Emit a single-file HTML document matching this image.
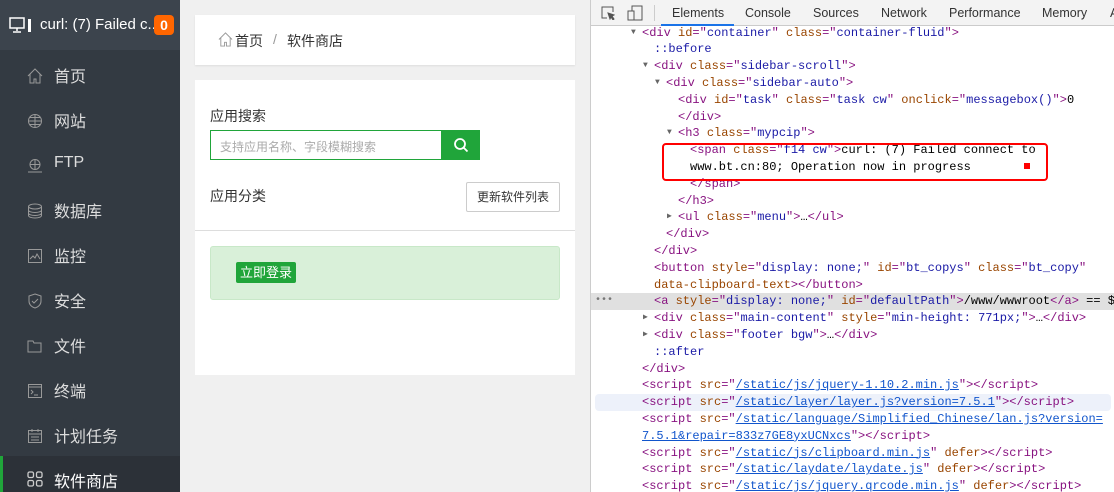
<!DOCTYPE html>
<html><head><meta charset="utf-8">
<style>
*{margin:0;padding:0;box-sizing:border-box}
body{width:1114px;height:492px;overflow:hidden;position:relative;background:#f0f0f0;font-family:"Liberation Sans","Noto Sans CJK SC",sans-serif}
#side{position:absolute;left:0;top:0;width:180px;height:492px;background:#333a42}
#side .hd{height:50px;background:#3c444d;position:relative;color:#fff}
#side .hd .t{position:absolute;left:40px;top:16px;font-size:15px;white-space:nowrap}
#side .hd .b{position:absolute;left:154px;top:15px;width:20px;height:20px;background:#f60;border-radius:4px;color:#fff;font-weight:bold;font-size:14px;text-align:center;line-height:20px}
.it{position:absolute;left:0;width:180px;height:45px;color:#ddd;font-size:16px}
.it span{position:absolute;left:54px;top:12px}
.it svg{position:absolute;left:27px;top:17px}
.act{background:#2c3138;border-left:3px solid #20a53a}
#main{position:absolute;left:180px;top:0;width:410px;height:492px;background:#f0f0f0}
.card{position:absolute;background:#fff;left:15px;width:380px}
#dev{position:absolute;left:590px;top:0;width:524px;height:492px;background:#fff;border-left:1px solid #ccc;overflow:hidden}
#tabs{height:26px;background:#f3f3f3;border-bottom:1px solid #cbcbcb;position:relative;font-size:12.5px;color:#333;z-index:2}
#tabs span{position:absolute;top:6px}
#code{position:absolute;top:24.6px;left:0;width:524px;font-family:"Liberation Mono",monospace;font-size:12px}
#code div{height:16.8px;line-height:16.8px;position:relative;white-space:pre}
.g{color:#881280}.a{color:#994500}.v{color:#1a1aa6}.p{color:#1a1aa6}.l{color:#1155cc;text-decoration:underline}
.tr{position:absolute;font-size:8px;color:#666;font-style:normal}
</style></head><body>
<div id="side">
 <div class="hd">
  <svg style="position:absolute;left:9px;top:17px" width="24" height="16" viewBox="0 0 24 16" fill="none" stroke="#fff" stroke-width="1.5"><rect x="1" y="1" width="14" height="10"/><path d="M8 11v3M4 15h8"/><rect x="19" y="2" width="3" height="13" fill="#fff" stroke="none"/></svg>
  <div class="t">curl: (7) Failed c...</div><div class="b">0</div>
 </div>
 <div class="it" style="top:51px"><svg width="16" height="16" viewBox="0 0 16 16" fill="none" stroke="#999"><path d="M1 8L8 1l7 7M3 6v9h4v-4h2v4h4V6"/></svg><span>首页</span></div>
 <div class="it" style="top:96px"><svg width="16" height="16" viewBox="0 0 16 16" fill="none" stroke="#999"><circle cx="8" cy="8" r="6.5"/><path d="M1.5 8h13M8 1.5v13M3 4.5h10M3 11.5h10"/></svg><span>网站</span></div>
 <div class="it" style="top:141px"><svg width="16" height="16" viewBox="0 0 16 16" fill="none" stroke="#999"><circle cx="8" cy="6.5" r="5"/><path d="M3 6.5h10M8 1.5v10M1 14h14"/></svg><span style="top:13px">FTP</span></div>
 <div class="it" style="top:186px"><svg width="16" height="16" viewBox="0 0 16 16" fill="none" stroke="#999"><ellipse cx="8" cy="3.5" rx="6.5" ry="2.5"/><path d="M1.5 3.5v9c0 1.5 3 2.5 6.5 2.5s6.5-1 6.5-2.5v-9M1.5 7c0 1.5 3 2.5 6.5 2.5s6.5-1 6.5-2.5M1.5 10c0 1.5 3 2.5 6.5 2.5s6.5-1 6.5-2.5"/></svg><span>数据库</span></div>
 <div class="it" style="top:231px"><svg width="16" height="16" viewBox="0 0 16 16" fill="none" stroke="#999"><rect x="1.5" y="1.5" width="13" height="13"/><path d="M3 11l3-3 2 2 2-4 3 5"/></svg><span>监控</span></div>
 <div class="it" style="top:276px"><svg width="16" height="16" viewBox="0 0 16 16" fill="none" stroke="#999"><path d="M8 1l6 2v5c0 4-3 6-6 7-3-1-6-3-6-7V3z M5 8l2 2 4-4"/></svg><span>安全</span></div>
 <div class="it" style="top:321px"><svg width="16" height="16" viewBox="0 0 16 16" fill="none" stroke="#999"><path d="M1 3h5l1 2h7v9H1z"/></svg><span>文件</span></div>
 <div class="it" style="top:366px"><svg width="16" height="16" viewBox="0 0 16 16" fill="none" stroke="#999"><rect x="1.5" y="1.5" width="13" height="13"/><path d="M1.5 4h13M4 7l2 2-2 2M7 12h4"/></svg><span>终端</span></div>
 <div class="it" style="top:411px"><svg width="16" height="16" viewBox="0 0 16 16" fill="none" stroke="#999"><rect x="1.5" y="2.5" width="13" height="12"/><path d="M1.5 6h13M5 1v3M11 1v3M4 9h8M4 12h8"/></svg><span>计划任务</span></div>
 <div class="it act" style="top:456px;height:36px"><svg style="left:24px;top:15px" width="16" height="16" viewBox="0 0 16 16" fill="none" stroke="#ccc" stroke-width="1.3"><rect x="1" y="1" width="5.5" height="5.5" rx="1.5"/><rect x="9.5" y="1" width="5.5" height="5.5" rx="1.5"/><rect x="1" y="9.5" width="5.5" height="5.5" rx="1.5"/><rect x="9.5" y="9.5" width="5.5" height="5.5" rx="1.5"/></svg><span style="left:51px;top:12px;color:#fff">软件商店</span></div>
</div>
<div id="main">
 <div class="card" style="top:15px;height:50px;box-shadow:0 1px 2px rgba(0,0,0,.08)">
  <svg style="position:absolute;left:23px;top:17px" width="15" height="15" viewBox="0 0 16 16" fill="none" stroke="#999"><path d="M1 8L8 1l7 7M3 6v9h4v-4h2v4h4V6"/></svg>
  <span style="position:absolute;left:40px;top:16px;font-size:14px;color:#333">首页</span>
  <span style="position:absolute;left:78px;top:16px;font-size:14px;color:#999">/</span>
  <span style="position:absolute;left:92px;top:16px;font-size:14px;color:#333">软件商店</span>
 </div>
 <div class="card" style="top:80px;height:295px">
  <div style="position:absolute;left:15px;top:26px;font-size:14px;color:#333">应用搜索</div>
  <div style="position:absolute;left:15px;top:50px;width:232px;height:30px;border:1px solid #20a53a;font-size:12px;color:#aaa;padding:7px 0 0 9px">支持应用名称、字段模糊搜索</div>
  <div style="position:absolute;left:246px;top:50px;width:39px;height:30px;background:#20a53a"><svg style="position:absolute;left:12px;top:7px" width="16" height="16" viewBox="0 0 16 16" fill="none" stroke="#fff" stroke-width="1.8"><circle cx="7" cy="7" r="5"/><path d="M10.5 10.5l4 4"/></svg></div>
  <div style="position:absolute;left:15px;top:106px;font-size:14px;color:#333">应用分类</div>
  <div style="position:absolute;left:271px;top:102px;width:94px;height:30px;border:1px solid #ccc;border-radius:2px;font-size:12px;color:#333;text-align:center;line-height:28px">更新软件列表</div>
  <div style="position:absolute;left:0;top:150px;width:380px;height:1px;background:#ddd"></div>
  <div style="position:absolute;left:15px;top:166px;width:350px;height:54px;background:#d9f0d9;border:1px solid #c8e8c8;border-radius:3px">
   <div style="position:absolute;left:25px;top:15px;width:60px;height:21px;background:#20a53a;border-radius:2px;color:#fff;font-size:13px;text-align:center;line-height:21px">立即登录</div>
  </div>
 </div>
</div>
<div id="dev">
 <div id="tabs">
  <svg style="position:absolute;left:10px;top:6px" width="14" height="14" viewBox="0 0 14 14" fill="none" stroke="#555"><path d="M6 12H1V1h11v5"/><path d="M7 7l6 2-2 1 2 3-1 1-2-3-1 2z" fill="#555"/></svg>
  <svg style="position:absolute;left:36px;top:5px" width="16" height="16" viewBox="0 0 16 16" fill="none" stroke="#555"><rect x="5" y="1" width="10" height="14"/><rect x="1" y="6" width="6" height="9" fill="#f3f3f3"/></svg>
  <div style="position:absolute;left:63px;top:5px;width:1px;height:16px;background:#ccc"></div>
  <span style="left:81px;color:#333">Elements</span>
  <div style="position:absolute;left:70px;top:24px;width:73px;height:2px;background:#1a73e8"></div>
  <span style="left:154px">Console</span>
  <span style="left:222px">Sources</span>
  <span style="left:290px">Network</span>
  <span style="left:358px">Performance</span>
  <span style="left:451px">Memory</span>
  <span style="left:519px">A</span>
 </div>
 <div id="code"><div style="padding-left:51px"><i class="tr" style="left:40px">▼</i><span class="g">&lt;div </span><span class="a">id</span><span class="g">="</span><span class="v">container</span><span class="g">" </span><span class="a">class</span><span class="g">="</span><span class="v">container-fluid</span><span class="g">"&gt;</span></div><div style="padding-left:63px"><span class="p">::before</span></div><div style="padding-left:63px"><i class="tr" style="left:52px">▼</i><span class="g">&lt;div </span><span class="a">class</span><span class="g">="</span><span class="v">sidebar-scroll</span><span class="g">"&gt;</span></div><div style="padding-left:75px"><i class="tr" style="left:64px">▼</i><span class="g">&lt;div </span><span class="a">class</span><span class="g">="</span><span class="v">sidebar-auto</span><span class="g">"&gt;</span></div><div style="padding-left:87px"><span class="g">&lt;div </span><span class="a">id</span><span class="g">="</span><span class="v">task</span><span class="g">" </span><span class="a">class</span><span class="g">="</span><span class="v">task cw</span><span class="g">" </span><span class="a">onclick</span><span class="g">="</span><span class="v">messagebox()</span><span class="g">"&gt;</span>0</div><div style="padding-left:87px"><span class="g">&lt;/div&gt;</span></div><div style="padding-left:87px"><i class="tr" style="left:76px">▼</i><span class="g">&lt;h3 </span><span class="a">class</span><span class="g">="</span><span class="v">mypcip</span><span class="g">"&gt;</span></div><div style="padding-left:99px"><span class="g">&lt;span </span><span class="a">class</span><span class="g">="</span><span class="v">f14 cw</span><span class="g">"&gt;</span>curl: (7) Failed connect to</div><div style="padding-left:99px">www.bt.cn:80; Operation now in progress</div><div style="padding-left:99px"><span class="g">&lt;/span&gt;</span></div><div style="padding-left:87px"><span class="g">&lt;/h3&gt;</span></div><div style="padding-left:87px"><i class="tr" style="left:76px">▶</i><span class="g">&lt;ul </span><span class="a">class</span><span class="g">="</span><span class="v">menu</span><span class="g">"&gt;</span>…<span class="g">&lt;/ul&gt;</span></div><div style="padding-left:75px"><span class="g">&lt;/div&gt;</span></div><div style="padding-left:63px"><span class="g">&lt;/div&gt;</span></div><div style="padding-left:63px"><span class="g">&lt;button </span><span class="a">style</span><span class="g">="</span><span class="v">display: none;</span><span class="g">" </span><span class="a">id</span><span class="g">="</span><span class="v">bt_copys</span><span class="g">" </span><span class="a">class</span><span class="g">="</span><span class="v">bt_copy</span><span class="g">"</span></div><div style="padding-left:63px"><span class="a">data-clipboard-text</span><span class="g">&gt;&lt;/button&gt;</span></div><div style="padding-left:63px;background:#e0e0e0"><i style="position:absolute;left:4px;font-style:normal;color:#777;font-size:10px">•••</i><span class="g">&lt;a </span><span class="a">style</span><span class="g">="</span><span class="v">display: none;</span><span class="g">" </span><span class="a">id</span><span class="g">="</span><span class="v">defaultPath</span><span class="g">"&gt;</span>/www/wwwroot<span class="g">&lt;/a&gt;</span> == $0</div><div style="padding-left:63px"><i class="tr" style="left:52px">▶</i><span class="g">&lt;div </span><span class="a">class</span><span class="g">="</span><span class="v">main-content</span><span class="g">" </span><span class="a">style</span><span class="g">="</span><span class="v">min-height: 771px;</span><span class="g">"&gt;</span>…<span class="g">&lt;/div&gt;</span></div><div style="padding-left:63px"><i class="tr" style="left:52px">▶</i><span class="g">&lt;div </span><span class="a">class</span><span class="g">="</span><span class="v">footer bgw</span><span class="g">"&gt;</span>…<span class="g">&lt;/div&gt;</span></div><div style="padding-left:63px"><span class="p">::after</span></div><div style="padding-left:51px"><span class="g">&lt;/div&gt;</span></div><div style="padding-left:51px"><span class="g">&lt;script </span><span class="a">src</span><span class="g">="</span><span class="l">/static/js/jquery-1.10.2.min.js</span><span class="g">"&gt;&lt;/script&gt;</span></div><div style="background:#edf1fa;border-radius:4px;margin:0 4px;padding-left:47px"><span class="g">&lt;script </span><span class="a">src</span><span class="g">="</span><span class="l">/static/layer/layer.js?version=7.5.1</span><span class="g">"&gt;&lt;/script&gt;</span></div><div style="padding-left:51px"><span class="g">&lt;script </span><span class="a">src</span><span class="g">="</span><span class="l">/static/language/Simplified_Chinese/lan.js?version=</span></div><div style="padding-left:51px"><span class="l">7.5.1&amp;repair=833z7GE8yxUCNxcs</span><span class="g">"&gt;&lt;/script&gt;</span></div><div style="padding-left:51px"><span class="g">&lt;script </span><span class="a">src</span><span class="g">="</span><span class="l">/static/js/clipboard.min.js</span><span class="g">" </span><span class="a">defer</span><span class="g">&gt;&lt;/script&gt;</span></div><div style="padding-left:51px"><span class="g">&lt;script </span><span class="a">src</span><span class="g">="</span><span class="l">/static/laydate/laydate.js</span><span class="g">" </span><span class="a">defer</span><span class="g">&gt;&lt;/script&gt;</span></div><div style="padding-left:51px"><span class="g">&lt;script </span><span class="a">src</span><span class="g">="</span><span class="l">/static/js/jquery.qrcode.min.js</span><span class="g">" </span><span class="a">defer</span><span class="g">&gt;&lt;/script&gt;</span></div></div>
 <div style="position:absolute;left:71px;top:143px;width:386px;height:38px;border:2px solid #f00;border-radius:4px"></div>
 <div style="position:absolute;left:433px;top:163px;width:6px;height:6px;background:#f00"></div>
</div>
</body></html>
